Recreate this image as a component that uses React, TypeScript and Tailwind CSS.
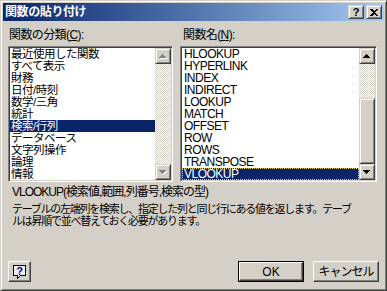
const categories = [
  '最近使用した関数',
  'すべて表示',
  '財務',
  '日付/時刻',
  '数学/三角',
  '統計',
  '検索/行列',
  'データベース',
  '文字列操作',
  '論理',
  '情報',
];

const functions = [
  'HLOOKUP',
  'HYPERLINK',
  'INDEX',
  'INDIRECT',
  'LOOKUP',
  'MATCH',
  'OFFSET',
  'ROW',
  'ROWS',
  'TRANSPOSE',
  'VLOOKUP',
];

const raised =
  'border border-t-white border-l-white border-r-[#404040] border-b-[#404040] shadow-[inset_-1px_-1px_#808080]';
const raisedScroll =
  'border border-t-[#d4d0c8] border-l-[#d4d0c8] border-r-[#404040] border-b-[#404040] shadow-[inset_1px_1px_#fff,inset_-1px_-1px_#808080]';
const sunken =
  'border border-t-[#808080] border-l-[#808080] border-r-white border-b-white shadow-[inset_1px_1px_#404040,inset_-1px_-1px_#d4d0c8]';
const checker =
  'bg-[image:repeating-conic-gradient(#d4d0c8_0_25%,#ffffff_0_50%)] bg-[length:2px_2px]';

function Arrow({ up, disabled }: { up: boolean; disabled?: boolean }) {
  const pts = up ? '3.5,0 7,4 0,4' : '0,0 7,0 3.5,4';
  return (
    <svg width="8" height="5" viewBox="0 0 8 5" shapeRendering="crispEdges">
      {disabled && <polygon points={pts} fill="#fff" transform="translate(1 1)" />}
      <polygon points={pts} fill={disabled ? '#808080' : '#000'} />
    </svg>
  );
}

function ScrollButton({ up, disabled }: { up: boolean; disabled?: boolean }) {
  return (
    <div className={`w-[16px] h-[16px] bg-[#d4d0c8] flex items-center justify-center shrink-0 ${raisedScroll}`}>
      <Arrow up={up} disabled={disabled} />
    </div>
  );
}

function TitleBar() {
  return (
    <div className="h-[18px] flex items-center bg-gradient-to-r from-[#0a246a] to-[#a6caf0] pl-[2px] pr-[2px]">
      <span className="text-white font-bold text-[12px] leading-[12px] tracking-[-0.4px]">関数の貼り付け</span>
      <div className="ml-auto flex items-center">
        <div className={`w-[16px] h-[14px] bg-[#d4d0c8] flex items-center justify-center ${raisedScroll}`}>
          <span className="text-[11px] font-bold leading-[10px] font-['Liberation_Sans',sans-serif]">?</span>
        </div>
        <div className={`ml-[2px] w-[16px] h-[14px] bg-[#d4d0c8] flex items-center justify-center ${raisedScroll}`}>
          <svg width="8" height="7" viewBox="0 0 8 7" shapeRendering="crispEdges">
            <path d="M0 0h2l2 2 2-2h2L5 3.5 8 7H6L4 5 2 7H0l3-3.5z" fill="#000" />
          </svg>
        </div>
      </div>
    </div>
  );
}

function HelpIcon() {
  return (
    <svg width="16" height="16" viewBox="0 0 16 16" shapeRendering="crispEdges">
      <defs>
        <pattern id="dots" width="2" height="2" patternUnits="userSpaceOnUse">
          <rect width="2" height="2" fill="#ffff00" />
          <rect width="1" height="1" fill="#ffffff" />
          <rect x="1" y="1" width="1" height="1" fill="#ffffff" />
        </pattern>
      </defs>
      <path d="M1.5 1.5h12v10h-5l-3 3v-3h-4z" fill="url(#dots)" stroke="#000" />
      <text x="7.5" y="10.5" textAnchor="middle" fontSize="11" fontWeight="bold" fill="#0000a0" fontFamily="Liberation Sans, sans-serif">?</text>
    </svg>
  );
}

export default function App() {
  return (
    <div className="w-[387px] h-[291px] bg-[#d4d0c8] border border-t-[#d4d0c8] border-l-[#d4d0c8] border-r-[#404040] border-b-[#404040] shadow-[inset_1px_1px_#fff,inset_-1px_-1px_#808080] p-[2px] flex flex-col text-black font-['Liberation_Sans','Noto_Sans_CJK_JP',sans-serif]">
      <TitleBar />
      <div className="flex-1 flex flex-col px-[5px] pt-[8px] pb-[6px]">
        <div className="flex gap-[7px]">
          {/* 関数の分類 */}
          <div className="w-[165px] flex flex-col">
            <label className="text-[12px] leading-[12px] tracking-[-0.6px] pl-[1px]">
              関数の分類(<span className="underline">C</span>):
            </label>
            <div className={`mt-[5px] h-[136px] bg-white flex ${sunken} p-[1px]`}>
              <div className="flex-1 flex flex-col">
                {categories.map((c) => (
                  <div
                    key={c}
                    className={`h-[12px] leading-[12px] text-[11.5px] tracking-[-0.5px] pl-[1px] whitespace-nowrap ${
                      c === '検索/行列' ? 'bg-[#0a246a] text-white' : ''
                    }`}
                  >
                    {c}
                  </div>
                ))}
              </div>
              <div className="w-[16px] flex flex-col">
                <ScrollButton up disabled />
                <div className={`flex-1 ${checker}`} />
                <ScrollButton up={false} disabled />
              </div>
            </div>
          </div>

          {/* 関数名 */}
          <div className="w-[197px] flex flex-col">
            <label className="text-[12px] leading-[12px] tracking-[-0.6px] pl-[3px]">
              関数名(<span className="underline">N</span>):
            </label>
            <div className={`mt-[5px] h-[136px] bg-white flex ${sunken} p-[1px]`}>
              <div className="flex-1 flex flex-col">
                {functions.map((f) => (
                  <div
                    key={f}
                    className={`h-[12px] leading-[12px] text-[12px] tracking-[-0.5px] pl-[2px] whitespace-nowrap ${
                      f === 'VLOOKUP'
                        ? 'bg-[#0a246a] text-white outline-1 outline-dotted outline-[#e8d870] -outline-offset-1'
                        : ''
                    }`}
                  >
                    {f}
                  </div>
                ))}
              </div>
              <div className="w-[16px] flex flex-col">
                <ScrollButton up />
                <div className={`h-[34px] ${checker}`} />
                <div className={`flex-1 bg-[#d4d0c8] ${raisedScroll}`} />
                <ScrollButton up={false} />
              </div>
            </div>
          </div>
        </div>

        <div className="mt-[4px] pl-[4px] text-[12px] leading-[12px] tracking-[-1px] whitespace-nowrap">
          VLOOKUP(検索値,範囲,列番号,検索の型)
        </div>

        <div className="mt-[5px] pl-[4px] text-[11px] leading-[12px] tracking-[-1.25px] whitespace-nowrap">
          <div>テーブルの左端列を検索し、指定した列と同じ行にある値を返します。テーブ</div>
          <div>ルは昇順で並べ替えておく必要があります。</div>
        </div>

        <div className="mt-auto flex items-center">
          <div className={`w-[23px] h-[21px] bg-[#d4d0c8] flex items-center justify-center ${raised}`}>
            <HelpIcon />
          </div>
          <div className="ml-auto w-[66px] h-[21px] border border-black">
            <div className={`w-full h-full bg-[#d4d0c8] flex items-center justify-center text-[12px] ${raised}`}>
              OK
            </div>
          </div>
          <div
            className={`ml-[9px] w-[66px] h-[21px] bg-[#d4d0c8] flex items-center justify-center text-[12px] tracking-[-1px] ${raised}`}
          >
            キャンセル
          </div>
        </div>
      </div>
    </div>
  );
}
